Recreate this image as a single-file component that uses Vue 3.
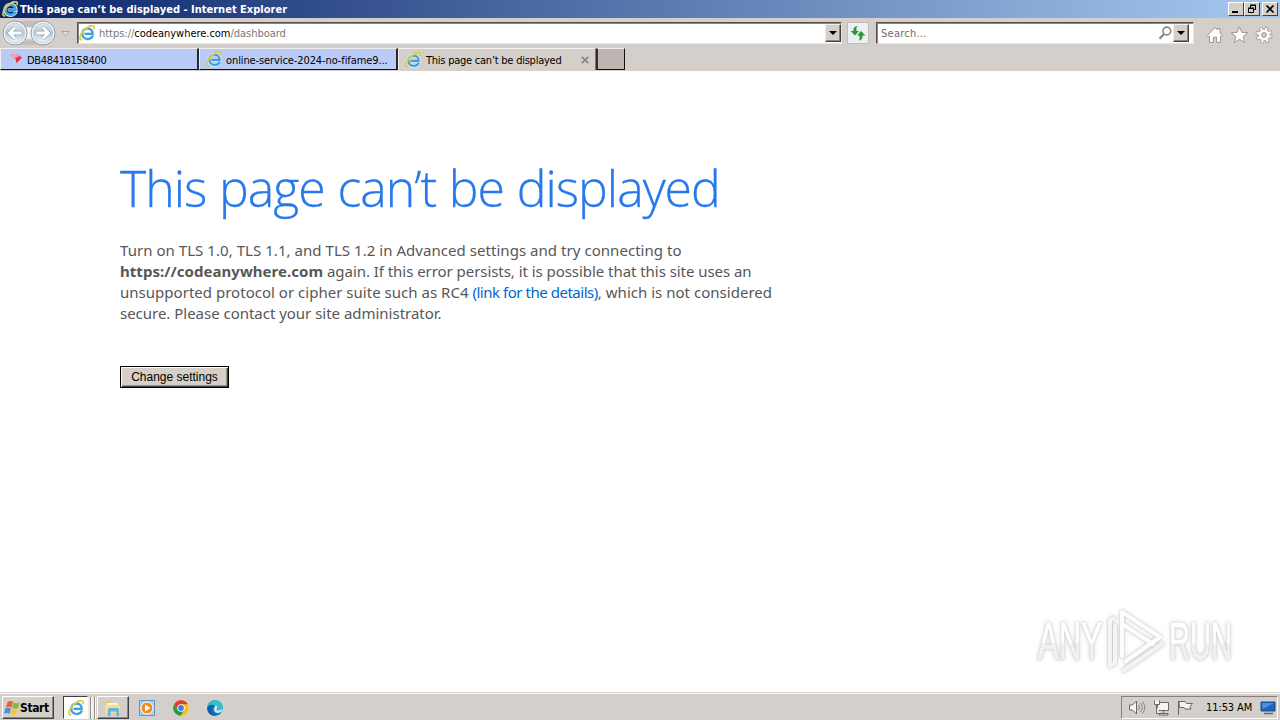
<script setup>
import { h } from "vue";

const tabs = [
  { id: 1, title: "DB48418158400", icon: "flag", active: false },
  { id: 2, title: "online-service-2024-no-fifame9...", icon: "ie", active: false },
  { id: 3, title: "This page can’t be displayed", icon: "ie", active: true },
];

// Internet Explorer logo, used in the title bar, tabs and taskbar
const IeIcon = () =>
  h("svg", { viewBox: "0 0 16 16" }, [
    h("path", {
      d: "M14.200 10.300C13.300 13 11.300 14.300 8.600 14.300 5.200 14.300 2.900 12 2.900 8.800S5.300 3.300 8.700 3.300c3.400 0 5.400 2.300 5.300 5.700H6",
      fill: "none",
      stroke: "#d9f1fc",
      "stroke-width": "3.200",
    }),
    h("path", {
      d: "M13.900 10.600C13 12.900 11.300 14 8.700 14 5.400 14 3.300 11.900 3.300 8.800S5.500 3.700 8.700 3.700c3.200 0 5 2.100 4.900 5.100H5.500",
      fill: "none",
      stroke: "#3d9fdb",
      "stroke-width": "2.200",
    }),
    h("path", {
      d: "M3.300 14.800C.3 15.400.2 12 2.600 8.300 5.800 3.300 11.800-.5 14.400.9c1.100.6 1 1.900.5 3.200",
      fill: "none",
      stroke: "#e6cb3a",
      "stroke-width": "1.700",
    }),
  ]);
</script>

<template>
  <div class="desktop">
    <header class="title-bar">
      <IeIcon class="title-icon" />
      <span class="title-text">This page can’t be displayed - Internet Explorer</span>
      <div class="window-buttons">
        <button class="win-btn">
          <svg viewBox="0 0 12 10"><path d="M2 8h6" stroke="#000" stroke-width="2" /></svg>
        </button>
        <button class="win-btn">
          <svg viewBox="0 0 12 10" fill="none" stroke="#000">
            <path d="M4.500 4V1.500h5v4H8M4 1h6" />
            <path d="M2.500 4.500h5v4h-5zM2 4h6" />
          </svg>
        </button>
        <button class="win-btn close">
          <svg viewBox="0 0 12 10"><path d="M2.500 1.500l7 7M9.500 1.500l-7 7" stroke="#000" stroke-width="1.700" /></svg>
        </button>
      </div>
    </header>

    <div class="nav-bar">
      <svg class="history" viewBox="0 0 74 30">
        <defs>
          <linearGradient id="orb" x1="0" y1="0" x2="0" y2="1">
            <stop offset="0" stop-color="#e3e7ea" />
            <stop offset=".5" stop-color="#b9c6d3" />
            <stop offset="1" stop-color="#eff8ff" />
          </linearGradient>
        </defs>
        <path d="M15 3h28v4q-14 5-28 0zM15 25q14-5 28 0v2H15z" fill="#c2beba" />
        <path d="M20 8q9 3 18 0v14q-9-3-18 0z" fill="#f2f3f3" />
        <g v-for="cx in [15, 43]" :key="cx">
          <circle :cx="cx" cy="15" r="12" fill="#f6f9fb" stroke="#8e9aa5" />
          <circle :cx="cx" cy="15" r="9.800" fill="url(#orb)" stroke="#c3d0db" />
        </g>
        <path d="M21.500 15H10M15 9.500L9.500 15l5.500 5.500" class="arrow-edge" />
        <path d="M36.500 15H48M43 9.500l5.500 5.500-5.500 5.500" class="arrow-edge" />
        <path d="M21.500 15H10M15 9.500L9.500 15l5.500 5.500" class="arrow" />
        <path d="M36.500 15H48M43 9.500l5.500 5.500-5.500 5.500" class="arrow" />
        <path d="M61.500 13.500h8l-4 4z" fill="#e4e0dc" stroke="#aaa5a0" />
      </svg>
      <div class="field address">
        <IeIcon class="field-icon" />
        <span class="url">https://<b>codeanywhere.com</b>/dashboard</span>
        <span class="drop"><i></i></span>
      </div>
      <div class="refresh">
        <svg viewBox="0 0 20 20">
          <path d="M9.500 3C5.500 3.500 5.500 5.500 5.500 8H2.500L7 12.500 11 8H8.500C8.500 6 8 4.500 9.500 3z" fill="#299b32" />
          <path d="M10.500 17.500c4-.5 4-2.500 4-5h3L13 8 9 12.500h2.500c0 2 .5 3.500-1 5z" fill="#299b32" />
        </svg>
      </div>
      <div class="field search">
        <span class="placeholder">Search...</span>
        <svg class="magnifier" viewBox="0 0 14 14" fill="none" stroke="#858585">
          <circle cx="8.800" cy="5" r="3.900" stroke-width="1.600" />
          <path d="M5.800 8.200L1.500 12.700" stroke-width="2.300" />
        </svg>
        <span class="drop"><i></i></span>
      </div>
      <svg class="tools" viewBox="0 0 68 20" fill="#fff" stroke="#9b9794">
        <path d="M1.300 10.500L9 2.500l2.500 2.500V3.500H14V8l2.700 2.500-1.200 1.300-1-.8v6.500h-3.800v-5.300H7.300v5.300H3.500V11l-1 .8z" />
        <path d="M33.500 1.800l2.300 5.500 6 .4-4.600 3.900 1.500 5.900-5.200-3.200-5.200 3.200 1.500-5.900-4.600-3.900 6-.4z" />
        <circle cx="58" cy="10" r="6.500" stroke-width="4" stroke-dasharray="3 2.105" fill="none" />
        <circle cx="58" cy="10" r="6" />
        <circle cx="58" cy="10" r="6.500" fill="none" stroke="#fff" stroke-width="2.400" stroke-dasharray="2 3.105" stroke-dashoffset="-.5" />
        <circle cx="58" cy="10" r="2.400" fill="#d4cfca" />
      </svg>
    </div>

    <nav class="tab-bar">
      <div v-for="tab in tabs" :key="tab.id" :class="['tab', { active: tab.active }]">
        <IeIcon v-if="tab.icon === 'ie'" class="tab-icon" />
        <svg v-else class="tab-icon" viewBox="0 0 16 16">
          <path d="M2 4l8-1 5 3.500-5.500 5.500-1-4z" fill="#ee4c60" />
          <path d="M2 4l7.500-1.500L12 5 7 7.500z" fill="#f3a3b0" />
          <path d="M9 7l6-.5L9.500 12z" fill="#dc2c4c" />
        </svg>
        <span class="tab-title">{{ tab.title }}</span>
        <svg v-if="tab.active" class="tab-close" viewBox="0 0 8 8">
          <path d="M.8.8l6.400 6.400M7.200.8L.8 7.200" stroke="#8a8682" stroke-width="1.800" />
        </svg>
      </div>
      <div class="new-tab"></div>
    </nav>

    <main class="page">
      <h1>This page can’t be displayed</h1>
      <p>
        <span class="line l1">Turn on TLS 1.0, TLS 1.1, and TLS 1.2 in Advanced settings and try connecting to</span>
        <span class="line l2"><strong>https://codeanywhere.com</strong> again. If this error persists, it is possible that this site uses an</span>
        <span class="line l3">unsupported protocol or cipher suite such as RC4 <a>(link for the details)</a>, which is not considered</span>
        <span class="line l4">secure. Please contact your site administrator.</span>
      </p>
      <button class="change-btn">Change settings</button>

      <svg class="watermark" viewBox="0 0 210 72">
        <defs>
          <linearGradient id="mark" x1="0" y1="0" x2="0" y2="1">
            <stop offset=".52" stop-color="#fff" />
            <stop offset=".54" stop-color="#f1f1f1" />
          </linearGradient>
        </defs>
        <g fill="url(#mark)">
          <text x="8" y="53" textLength="64" lengthAdjust="spacingAndGlyphs">ANY</text>
          <text x="139" y="53" textLength="63" lengthAdjust="spacingAndGlyphs">RUN</text>
        </g>
        <g fill="none" stroke="#fdfdfd" stroke-width="4" stroke-linejoin="round" stroke-linecap="round">
          <path d="M92 50V6l38 25-34 24" />
          <path d="M92 18l31 20" />
          <path d="M84 12l-4 2v46l5-3V20" stroke="#f5f5f5" />
          <path d="M94 64l38-26" stroke="#f3f3f3" />
        </g>
      </svg>
    </main>

    <footer class="taskbar">
      <button class="start">
        <svg viewBox="0 0 18 16">
          <path d="M5 1.500q3-2 5.500 0L9 7.500q-3-1.500-6 .2z" fill="#e8642c" />
          <path d="M11 2.200q3 1.500 6.500-.2L16 8q-3 1.500-6.300 0z" fill="#85b944" />
          <path d="M2.500 8.700q3-2 6 0L7 14q-3-1.500-6 0z" fill="#4c91d4" />
          <path d="M9.200 9q3 1.500 6.300 0L14 14.500q-3 1.500-6.200 0z" fill="#f6c343" />
        </svg>
        Start
      </button>
      <div class="task pressed"><IeIcon /></div>
      <div class="stack"></div>
      <div class="task raised">
        <svg viewBox="0 0 16 16">
          <path d="M1 1h5l1 2h7v10H1z" fill="#e9c965" />
          <path d="M2 3h11v6H2z" fill="#fff8d5" />
          <path d="M0 5h15v8H0z" fill="#f3df91" />
          <path d="M3 16V9.500q0-1.500 1.500-1.500h8Q14 8 14 9.500V16h-2.500v-4.500h-6V16z" fill="#62b5df" />
        </svg>
      </div>
      <svg class="launcher" viewBox="0 0 16 16">
        <path d="M.5.5h15v15H.5z" fill="#a9d1ef" stroke="#5798ce" />
        <circle cx="8" cy="8" r="6" fill="#f28b1b" stroke="#fff" />
        <path d="M6 4.500L11.500 8 6 11.500z" fill="#fff" />
      </svg>
      <svg class="launcher" viewBox="0 0 16 16">
        <circle cx="8" cy="8" r="7.800" fill="#fbc116" />
        <path d="M1.200 4.200A7.800 7.800 0 0 1 14.800 4.200H8L4.700 10z" fill="#e33b2e" />
        <path d="M1.200 4.200A7.800 7.800 0 0 0 7.500 15.800L11.300 10H4.700z" fill="#269b49" />
        <circle cx="8" cy="8" r="3.800" fill="#fff" />
        <circle cx="8" cy="8" r="2.900" fill="#3f7fe8" />
      </svg>
      <svg class="launcher" viewBox="0 0 16 16">
        <circle cx="8" cy="8" r="7.800" fill="#1475c4" />
        <path d="M.3 7C1 2 5 .2 8 .2c4.500 0 7.800 3.300 7.800 6.300 0 3-2.500 4.300-5 4.100-1.300-.1-1.700-.8-1-1.600C10.500 7 8 4.500 5 4.800 2.500 5 1 6 .3 7z" fill="#2fc3c7" />
        <path d="M9 5c1 1.500 1.500 3 .8 4-.7.8-.3 1.500 1 1.600 2.200.1 3.700-.7 4.500-2l.3 1.500c-.8 2-3 3-5 3C7 13 5.500 8 9 5z" fill="#c9edf7" />
        <path d="M5 8c-1 3 1.500 6.500 5 7-5.500 2-10-2-9.700-7C1 5.500 4 4 6.500 5.500 5.500 6 5 7 5 8z" fill="#155baa" />
      </svg>
      <div class="tray">
        <svg class="tray-icons" viewBox="0 0 68 18" fill="#f6f5f3" stroke="#6c6864">
          <path d="M1.500 6h3l4-4v13l-4-4h-3z" />
          <path d="M10.500 6q2 2.500 0 5M12.500 4q3.500 4.500 0 9M14.500 2.500q4.500 6 0 12" fill="none" stroke="#8a8682" />
          <path d="M29.500 3.500h11v8h-11zM31 14.500h9v1.500h-9zM35.500 12v2" />
          <path d="M26.500 1.500v4h5v-4M28.500 6v8.500h3" />
          <path d="M50.500 2v14M51 2.500h6l1.500 2h6l-2.500 3 1 2.500h-6l-1-1.500h-4.500z" />
        </svg>
        <span class="clock">11:53 AM</span>
        <svg class="monitor" viewBox="0 0 16 14">
          <path d="M1 1h14v9H1z" fill="#1f65bf" stroke="#164b91" />
          <path d="M2 2h12L3 8z" fill="#4d90dc" />
          <path d="M4 12.500h9" stroke="#566b80" stroke-width="1.500" />
        </svg>
      </div>
    </footer>
  </div>
</template>

<style>
body {
  margin: 0;
  overflow: hidden;
}
</style>

<style scoped>
.desktop {
  width: 1280px;
  height: 720px;
  display: flex;
  flex-direction: column;
  background: #fff;
  font-family: "DejaVu Sans Condensed", "DejaVu Sans", sans-serif;
  font-stretch: condensed;
  font-size: 11px;
  color: #000;
}

.desktop * {
  box-sizing: border-box;
}

svg {
  display: block;
  flex-shrink: 0;
}

button {
  font: inherit;
  color: inherit;
  border-radius: 0;
}

.title-bar {
  height: 18px;
  flex-shrink: 0;
  display: flex;
  align-items: center;
  padding: 0 2px;
  background: linear-gradient(90deg, #0a246a, #a6caf0);
}

.title-icon {
  width: 16px;
  height: 16px;
}

.title-text {
  margin-left: 2px;
  color: #fff;
  font-weight: bold;
  letter-spacing: 0.01px;
  white-space: nowrap;
}

.window-buttons {
  margin-left: auto;
  display: flex;
}

.win-btn {
  width: 16px;
  height: 14px;
  padding: 0 1px;
  background: #d4d0c8;
  border: 1px solid;
  border-color: #fff #404040 #404040 #fff;
}

.win-btn svg {
  width: 12px;
  height: 10px;
}

.win-btn.close {
  margin-left: 2px;
}

.nav-bar {
  height: 30px;
  flex-shrink: 0;
  display: flex;
  background: #d4cfca;
}

.history {
  width: 74px;
  height: 30px;
  margin-right: 3px;
}

.arrow-edge {
  fill: none;
  stroke: #93a5b5;
  stroke-width: 4.4;
}

.arrow {
  fill: none;
  stroke: #fff;
  stroke-width: 2.8;
}

.field {
  height: 22px;
  margin-top: 4px;
  display: flex;
  align-items: center;
  background: #fff;
  border: 1px solid;
  border-color: #57504d #e6e2de #e6e2de #57504d;
  box-shadow: inset 1px 1px #8b8580;
}

.address {
  width: 765px;
  padding: 0 0 0 1px;
}

.field-icon {
  width: 16px;
  height: 16px;
}

.url {
  margin: 1px 0 0 4px;
  color: #777;
  letter-spacing: -0.03px;
}

.url b {
  color: #000;
  font-weight: normal;
}

.drop {
  width: 16px;
  height: 18px;
  margin-left: auto;
  display: flex;
  align-items: center;
  justify-content: center;
  background: #d4d0c8;
  border: 1px solid;
  border-color: #f0eeea #404040 #404040 #f0eeea;
  box-shadow: inset -1px -1px #8b8782;
}

.drop i {
  border: 4px solid transparent;
  border-top-color: #000;
  border-bottom: 0;
}

.refresh {
  width: 22px;
  height: 22px;
  margin: 4px 0 0 5px;
  background: #edf0f2;
  border: 1px solid #bebbb9;
}

.refresh svg {
  width: 20px;
  height: 20px;
}

.search {
  width: 318px;
  margin-left: 7px;
  padding: 0 4px;
}

.placeholder {
  margin-top: 1px;
  color: #6d6d6d;
  letter-spacing: 0.25px;
}

.magnifier {
  width: 14px;
  height: 14px;
  margin-left: auto;
}

.search .drop {
  margin-left: 1px;
}

.tools {
  width: 68px;
  height: 20px;
  margin: 7px 0 0 12px;
}

.tab-bar {
  height: 23px;
  flex-shrink: 0;
  display: flex;
  background: #d4cfca;
}

.tab {
  width: 199px;
  height: 22px;
  display: flex;
  align-items: center;
  padding-left: 6px;
  background: #bbcbf7;
  border: solid;
  border-width: 1px 2px 1px 1px;
  border-color: #f2f0ed #292929 #111 #f2f0ed;
}

.tab.active {
  width: 198px;
  padding-right: 6px;
  background: #d4cfca;
  border-width: 1px 1px 0 1px;
  border-right-color: #77726d;
}

.tab-icon {
  width: 16px;
  height: 16px;
  margin-right: 4px;
}

.tab-title {
  margin-top: 2px;
  white-space: nowrap;
  letter-spacing: -0.1px;
}

.tab:first-child .tab-title {
  letter-spacing: -0.33px;
}

.tab.active .tab-title {
  padding-left: 1px;
  margin-top: 1px;
  letter-spacing: -0.24px;
}

.tab-close {
  width: 8px;
  height: 8px;
  margin-left: auto;
}

.new-tab {
  width: 29px;
  height: 22px;
  background: #bcb5b2;
  border: solid;
  border-width: 1px 1px 1px 2px;
  border-color: #eeebe8 #111 #111 #35302d;
}

.page {
  flex: 1;
  min-height: 0;
  position: relative;
  padding: 83px 120px 0;
  font-family: "Open Sans", "Noto Sans", sans-serif;
  font-stretch: normal;
}

h1 {
  margin: 0;
  height: 68px;
  line-height: 68px;
  font-size: 50px;
  font-weight: 300;
  letter-spacing: -1px;
  word-spacing: 0.7px;
  color: #2778ec;
  -webkit-text-stroke: 0.3px #2778ec;
  white-space: nowrap;
}

p {
  margin: 18px 0 0;
  color: #575757;
  font-family: "Noto Sans", sans-serif;
  font-size: 15px;
  line-height: 21px;
}

.line {
  display: block;
  white-space: nowrap;
}

.l1 {
  letter-spacing: 0.045px;
}

.l2 {
  letter-spacing: -0.05px;
}

.l2 strong {
  letter-spacing: 0.04px;
}

.l3 {
  letter-spacing: 0.02px;
}

.l4 {
  letter-spacing: -0.02px;
}

a {
  color: #0066cc;
  letter-spacing: -0.47px;
}

.change-btn {
  display: block;
  width: 109px;
  height: 22px;
  margin-top: 42px;
  padding: 0;
  font: 12px "Liberation Sans", sans-serif;
  background: #d4d0c8;
  border: 1px solid #000;
  box-shadow: inset 1px 1px #fff, inset -1px -1px #404040, inset -2px -2px #96918b;
}

/* faint logo lying over the page corner */
.watermark {
  position: absolute;
  right: 40px;
  bottom: 14px;
  width: 210px;
  height: 72px;
  overflow: visible;
  filter: drop-shadow(0 0 1px #c4c4c4) drop-shadow(0 0 2px #e2e2e2);
}

.watermark text {
  font: 51px "Liberation Sans Narrow", "Liberation Sans", sans-serif;
  stroke: url(#mark);
  stroke-width: 1px;
}

.taskbar {
  height: 28px;
  flex-shrink: 0;
  display: flex;
  align-items: center;
  padding: 2px 2px 0;
  background: #d4cfca;
  border-top: 1px solid #d4cfca;
  box-shadow: inset 0 1px #fff;
}

.start {
  width: 52px;
  height: 23px;
  margin-right: 1px;
  display: flex;
  align-items: center;
  padding: 0;
  font-size: 12px;
  font-weight: bold;
  letter-spacing: -0.4px;
  background: #d4d0c8;
  border: 1px solid;
  border-color: #fff #404040 #404040 #fff;
  box-shadow: inset -1px -1px #8b8782;
}

.start svg {
  width: 17px;
  height: 16px;
}

.task {
  height: 23px;
  display: flex;
  align-items: center;
  justify-content: center;
  border: 1px solid;
}

.task svg {
  width: 16px;
  height: 16px;
}

.pressed {
  width: 25px;
  margin-left: 8px;
  background: #fff;
  border-color: #404040 #fff #fff #404040;
}

.stack {
  width: 8px;
  height: 22px;
  background: repeating-linear-gradient(90deg, #eeece9 0 2px, #918c87 2px 3px, #fff 3px 4px);
}

.raised {
  width: 32px;
  margin-left: 1px;
  border-color: #fff #404040 #404040 #fff;
  box-shadow: inset -1px -1px #8b8782;
}

.launcher {
  width: 16px;
  height: 16px;
  margin-left: 18px;
}

.launcher:first-of-type {
  margin-left: 10px;
}

.tray {
  width: 157px;
  height: 23px;
  margin-left: auto;
  padding: 0 1px 0 6px;
  display: flex;
  align-items: center;
  border: 1px solid;
  border-color: #85807b #fff #fff #85807b;
}

.tray-icons {
  width: 68px;
  height: 18px;
}

.clock {
  margin-left: 10px;
  white-space: nowrap;
  letter-spacing: -0.1px;
}

.monitor {
  width: 16px;
  height: 14px;
  margin-left: auto;
}
</style>
